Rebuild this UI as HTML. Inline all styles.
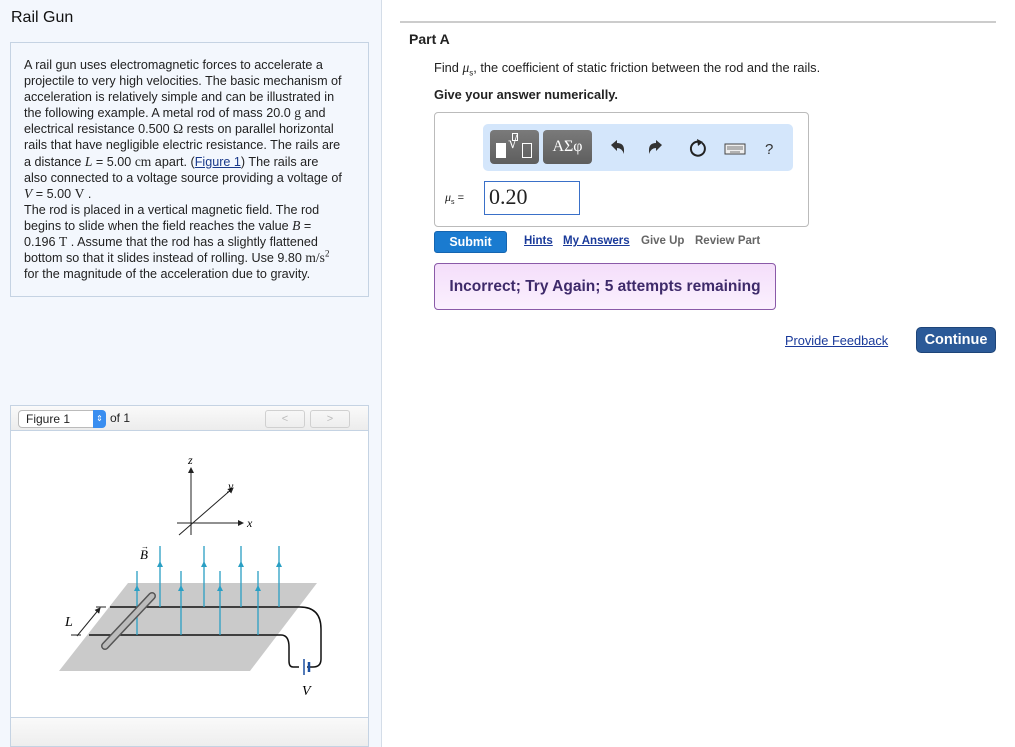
<!DOCTYPE html>
<html><head><meta charset="utf-8"><style>
*{margin:0;padding:0;box-sizing:border-box}
body{width:1015px;height:747px;background:#fff;font-family:"Liberation Sans",Arial,sans-serif;position:relative;overflow:hidden;color:#222}
.a{position:absolute}
#left{left:0;top:0;width:382px;height:747px;background:#f3f7fd;border-right:1px solid #d4dde8}
.serif{font-family:"Liberation Serif",serif;font-size:13.5px}
.prob{left:10px;top:42px;width:359px;height:255px;border:1px solid #c5d3e3;background:#f3f7fd;padding:14px 13px;font-size:12.6px;line-height:16.1px;color:#222;white-space:nowrap}
.prob a{color:#1a3a8a}
sup{line-height:0}
.fig{left:10px;top:405px;width:359px;height:342px;border:1px solid #c5d3e3;background:#fff}
a{color:#1a3a9a}
</style></head><body>
<div id="left" class="a">
 <div class="a" style="left:11px;top:9px;font-size:16px;color:#111">Rail Gun</div>
 <div class="a prob">A rail gun uses electromagnetic forces to accelerate a<br>projectile to very high velocities. The basic mechanism of<br>acceleration is relatively simple and can be illustrated in<br>the following example. A metal rod of mass 20.0 <span class="serif">g</span> and<br>electrical resistance 0.500 <span class="serif">Ω</span> rests on parallel horizontal<br>rails that have negligible electric resistance. The rails are<br>a distance <i class="serif">L</i> = 5.00 <span class="serif">cm</span> apart. (<a href="#" style="text-decoration:underline">Figure 1</a>) The rails are<br>also connected to a voltage source providing a voltage of<br><i class="serif">V</i> = 5.00 <span class="serif">V</span> .<br>The rod is placed in a vertical magnetic field. The rod<br>begins to slide when the field reaches the value <i class="serif">B</i> =<br>0.196 <span class="serif">T</span> . Assume that the rod has a slightly flattened<br>bottom so that it slides instead of rolling. Use 9.80 <span class="serif">m/s<sup style="font-size:9px">2</sup></span><br>for the magnitude of the acceleration due to gravity.</div>
 <div class="a fig">
  <div class="a" style="left:0;top:0;width:357px;height:25px;background:linear-gradient(#fafafa,#ececec);border-bottom:1px solid #c5d3e3"></div>
  <div class="a" style="left:7px;top:4px;width:87px;height:18px;border:1px solid #bbb;border-radius:4px;background:#fff;font-size:12px;padding:1px 7px">Figure 1</div>
  <div class="a" style="left:82px;top:4px;width:13px;height:18px;background:#3a8ef0;border-radius:0 4px 4px 0;color:#fff;font-size:8px;text-align:center;line-height:18px">⇕</div>
  <div class="a" style="left:99px;top:5px;font-size:12px">of 1</div>
  <div class="a" style="left:254px;top:4px;width:40px;height:18px;border:1px solid #d0d0d0;border-radius:3px;color:#bbb;font-size:11px;text-align:center;line-height:16px">&lt;</div>
  <div class="a" style="left:299px;top:4px;width:40px;height:18px;border:1px solid #d0d0d0;border-radius:3px;color:#bbb;font-size:11px;text-align:center;line-height:16px">&gt;</div>
  <div class="a" style="left:0;top:311px;width:357px;height:29px;background:linear-gradient(#fafafa,#eee);border-top:1px solid #c5d3e3"></div>
  <svg class="a" style="left:0;top:25px" width="357" height="286" viewBox="10 430 357 286">
   <defs><marker id="ar" markerWidth="6" markerHeight="6" refX="5" refY="3" orient="auto"><path d="M0,0L6,3L0,6z" fill="#222"/></marker></defs>
   <line x1="190" y1="534" x2="190" y2="467" stroke="#222" marker-end="url(#ar)"/>
   <line x1="176" y1="522" x2="242" y2="522" stroke="#222" marker-end="url(#ar)"/>
   <line x1="178" y1="534" x2="232" y2="487" stroke="#222" marker-end="url(#ar)"/>
   <text x="187" y="463" font-family="Liberation Serif" font-style="italic" font-size="12">z</text>
   <text x="227" y="489" font-family="Liberation Serif" font-style="italic" font-size="12">y</text>
   <text x="246" y="526" font-family="Liberation Serif" font-style="italic" font-size="12">x</text>
   <text x="139" y="558" font-family="Liberation Serif" font-style="italic" font-size="13">B</text>
   <text x="140" y="548" font-size="8">→</text>
   <polygon points="127,582 316,582 249,670 58,670" fill="#cacaca"/>
   <path d="M109,606 H299 Q320,606 320,628 V658 Q320,666 312,666 H306 M298,666 H292 Q288,666 288,660 V646 Q288,634 280,634 H88" fill="none" stroke="#111" stroke-width="1.5"/>
   <line x1="303" y1="658" x2="303" y2="674" stroke="#1a4fa0" stroke-width="1.5"/>
   <line x1="308" y1="661" x2="308" y2="671" stroke="#1a4fa0" stroke-width="2.5"/>
   <text x="301" y="694" font-family="Liberation Serif" font-style="italic" font-size="14">V</text>
   <text x="64" y="625" font-family="Liberation Serif" font-style="italic" font-size="14">L</text>
   <line x1="76" y1="635" x2="99" y2="607" stroke="#222" marker-end="url(#ar)"/>
   <line x1="70" y1="634" x2="80" y2="634" stroke="#222"/><line x1="95" y1="606" x2="105" y2="606" stroke="#222"/>
   <g stroke="#2a9fc4" stroke-width="1.3">
    <line x1="159" y1="545" x2="159" y2="606"/><line x1="203" y1="545" x2="203" y2="606"/><line x1="240" y1="545" x2="240" y2="606"/><line x1="278" y1="545" x2="278" y2="606"/>
    <line x1="136" y1="570" x2="136" y2="634"/><line x1="180" y1="570" x2="180" y2="634"/><line x1="219" y1="570" x2="219" y2="634"/><line x1="257" y1="570" x2="257" y2="634"/>
   </g>
   <g fill="#2a9fc4">
    <path d="M156,566l3,-6l3,6z"/><path d="M200,566l3,-6l3,6z"/><path d="M237,566l3,-6l3,6z"/><path d="M275,566l3,-6l3,6z"/>
    <path d="M133,590l3,-6l3,6z"/><path d="M177,590l3,-6l3,6z"/><path d="M216,590l3,-6l3,6z"/><path d="M254,590l3,-6l3,6z"/>
   </g>
   <line x1="104" y1="645" x2="151" y2="595" stroke="#555" stroke-width="8" stroke-linecap="round"/>
   <line x1="104" y1="645" x2="151" y2="595" stroke="#bbb" stroke-width="5" stroke-linecap="round"/>
  </svg>
 </div>
</div>
<div class="a" style="left:400px;top:21px;width:596px;height:2px;background:#ccc"></div>
<div class="a" style="left:409px;top:31px;font-size:14px;font-weight:bold;color:#222">Part A</div>
<div class="a" style="left:434px;top:60px;font-size:12.8px;white-space:nowrap">Find <i class="serif" style="font-size:13.5px">μ</i><sub style="font-size:8px;line-height:0">s</sub>, the coefficient of static friction between the rod and the rails.</div>
<div class="a" style="left:434px;top:87px;font-size:12.8px;font-weight:bold">Give your answer numerically.</div>
<div class="a" style="left:434px;top:112px;width:375px;height:115px;border:1px solid #bbb;border-radius:4px"></div>
<div class="a" style="left:483px;top:124px;width:310px;height:47px;background:#d4e6fb;border-radius:5px"></div>
<div class="a" style="left:490px;top:130px;width:49px;height:34px;background:linear-gradient(#7a7a7a,#5e5e5e);border-radius:4px"></div>
<div class="a" style="left:496px;top:143px;width:10px;height:15px;background:#fff"></div>
<div class="a" style="left:508px;top:133px;color:#fff;font-family:'Liberation Serif';font-size:17px">√</div>
<div class="a" style="left:522px;top:143px;width:10px;height:15px;border:1px solid #fff"></div>
<div class="a" style="left:512px;top:133px;width:6px;height:8px;border:1px solid #fff"></div>
<div class="a" style="left:543px;top:130px;width:49px;height:34px;background:linear-gradient(#7a7a7a,#5e5e5e);border-radius:4px;color:#fff;font-family:'Liberation Serif';font-size:16px;text-align:center;line-height:34px">ΑΣφ</div>
<svg class="a" style="left:608px;top:137px" width="170" height="22" viewBox="0 0 170 22">
 <path d="M3,8 L9,3 V6 Q16,6 16,13 V17 Q14,11 9,11 V14z" fill="#333"/>
 <path d="M54,8 L48,3 V6 Q41,6 41,13 V17 Q43,11 48,11 V14z" fill="#333"/>
 <path d="M92,5 A7,7 0 1 0 94,6" fill="none" stroke="#222" stroke-width="2"/><path d="M89,2 L95,5 L90,9z" fill="#222"/>
 <rect x="117" y="7" width="20" height="10" fill="#eee" stroke="#444"/>
 <path d="M119,10h16M119,12h16M122,15h10" stroke="#777" stroke-width="1"/>
 <text x="157" y="17" font-family="Liberation Sans" font-size="15" fill="#333">?</text>
</svg>
<div class="a" style="left:445px;top:190px;font-size:11px"><i class="serif" style="font-size:12px">μ</i><sub style="font-size:7px">s</sub> =</div>
<div class="a" style="left:484px;top:181px;width:96px;height:34px;border:1px solid #3a70c8;font-family:'Liberation Serif';font-size:22px;padding:2px 4px">0.20</div>
<div class="a" style="left:434px;top:231px;width:73px;height:22px;background:#1a7bd0;border:1px solid #1565b0;border-radius:3px;color:#fff;font-weight:bold;font-size:12.5px;text-align:center;line-height:20px">Submit</div>
<div class="a" style="left:524px;top:235px;font-size:11.5px;font-weight:bold"><a href="#" style="color:#1a3a9a">Hints</a></div>
<div class="a" style="left:563px;top:235px;font-size:11.5px;font-weight:bold"><a href="#" style="color:#1a3a9a">My Answers</a></div>
<div class="a" style="left:641px;top:235px;font-size:11.5px;font-weight:bold;color:#666">Give Up</div>
<div class="a" style="left:695px;top:235px;font-size:11.5px;font-weight:bold;color:#666">Review Part</div>
<div class="a" style="left:434px;top:263px;width:342px;height:47px;border:1px solid #8a5aa8;border-radius:4px;background:linear-gradient(#f4defa,#fbf0fe);color:#3e2a6a;font-weight:bold;font-size:15.5px;text-align:center;line-height:45px;white-space:nowrap">Incorrect; Try Again; 5 attempts remaining</div>
<div class="a" style="left:785px;top:333px;font-size:12.8px"><a href="#" style="color:#1a3a9a">Provide Feedback</a></div>
<div class="a" style="left:916px;top:327px;width:80px;height:26px;background:#2b5a98;border:1px solid #1d4478;border-radius:5px;color:#fff;font-weight:bold;font-size:14.5px;text-align:center;line-height:24px">Continue</div>
</body></html>
